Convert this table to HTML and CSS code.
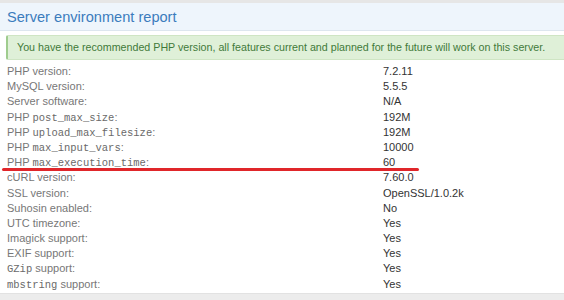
FILE: index.html
```html
<!DOCTYPE html>
<html lang="en">
<head>
  <meta charset="UTF-8" />
  <title>Server environment report</title>
  <link rel="stylesheet" href="styles.css">
</head>
<body>
  <div class="panel">
    <div class="panel-heading">Server environment report</div>
    <div class="panel-body">
      <div class="alert">You have the recommended PHP version, all features current and planned for the future will work on this server.</div>

      <div class="report">
        <div class="row"><span class="label">PHP version:</span><span class="value">7.2.11</span></div>
        <div class="row"><span class="label">MySQL version:</span><span class="value">5.5.5</span></div>
        <div class="row"><span class="label">Server software:</span><span class="value">N/A</span></div>
        <div class="row"><span class="label">PHP <code>post_max_size</code>:</span><span class="value">192M</span></div>
        <div class="row"><span class="label">PHP <code>upload_max_filesize</code>:</span><span class="value">192M</span></div>
        <div class="row"><span class="label">PHP <code>max_input_vars</code>:</span><span class="value">10000</span></div>
        <div class="row marked"><span class="label">PHP <code>max_execution_time</code>:</span><span class="value">60</span></div>
        <div class="row"><span class="label">cURL version:</span><span class="value">7.60.0</span></div>
        <div class="row"><span class="label">SSL version:</span><span class="value">OpenSSL/1.0.2k</span></div>
        <div class="row"><span class="label">Suhosin enabled:</span><span class="value">No</span></div>
        <div class="row"><span class="label">UTC timezone:</span><span class="value">Yes</span></div>
        <div class="row"><span class="label">Imagick support:</span><span class="value">Yes</span></div>
        <div class="row"><span class="label">EXIF support:</span><span class="value">Yes</span></div>
        <div class="row"><span class="label"><code>GZip</code> support:</span><span class="value">Yes</span></div>
        <div class="row"><span class="label"><code>mbstring</code> support:</span><span class="value">Yes</span></div>
      </div>
    </div>
  </div>
  <div class="footer-bar"></div>
</body>
</html>
```

FILE: styles.css
```css
body {
  font-family: 'Liberation Sans', Arial, sans-serif;
  margin: 0;
  padding: 0;
  background-color: #fff;
  color: #333;
  height: 300px;
  overflow: hidden;
  position: relative;
}

.panel {
  border-top: 3px solid #e6e6e6;
}

.panel-heading {
  background-color: #eef5fc;
  border-bottom: 1px solid #dde6ef;
  color: #3b7cbd;
  font-size: 14.6px;
  padding: 5px 7px 4px;
  height: 18px;
  line-height: 18px;
}

.panel-body {
  padding: 4px 0 0 6px;
}

.alert {
  background-color: #dff0d8;
  border: 1px solid #cfe5c4;
  border-left: 2px solid #9fcc8e;
  border-right: none;
  color: #3f7a3a;
  font-size: 10.7px;
  white-space: nowrap;
  overflow: hidden;
  padding: 5px 0 5px 9px;
  height: 13px;
  line-height: 13px;
  border-radius: 2px 0 0 2px;
}

.report {
  margin-top: 4px;
  font-size: 11px;
}

.row {
  display: flex;
  height: 15.2px;
  line-height: 15.2px;
  position: relative;
}

.label {
  width: 376px;
  padding-left: 1px;
  color: #777;
}

.value {
  color: #333;
}

code {
  font-family: 'Liberation Mono', 'Courier New', monospace;
  font-size: 10.5px;
  color: #6a6a6a;
}

/* red hand-drawn underline over the max_execution_time row */
.marked::after {
  content: '';
  position: absolute;
  left: -4px;
  width: 417px;
  top: 13px;
  height: 3px;
  background-color: #e0262a;
  border-radius: 2px;
}

.footer-bar {
  position: absolute;
  left: 0;
  right: 0;
  bottom: 0;
  height: 6px;
  background-color: #ececec;
  border-top: 1px solid #e2e2e2;
}
```
